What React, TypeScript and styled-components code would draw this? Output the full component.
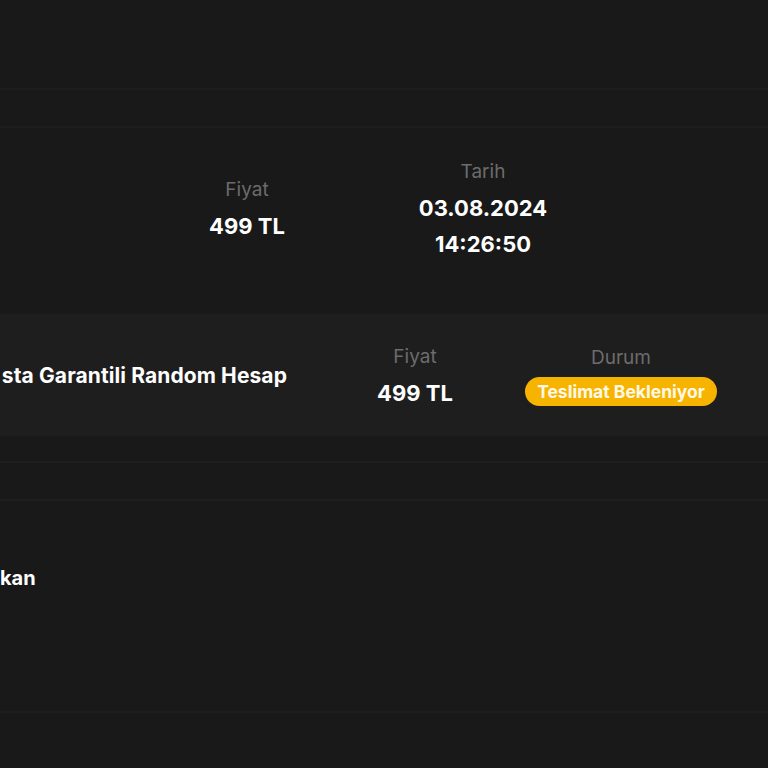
import styled, { createGlobalStyle } from 'styled-components';

const GlobalStyle = createGlobalStyle`
  html, body {
    margin: 0;
    padding: 0;
    background: #191919;
  }
  body {
    font-family: Inter, Lato, "Noto Sans", "Liberation Sans", sans-serif;
    color: #ffffff;
  }
`;

const Page = styled.div`
  display: flex;
  flex-direction: column;
  width: 768px;
  min-height: 768px;
  overflow: hidden;
  background: #191919;
`;

const Spacer = styled.div<{ $h: number }>`
  height: ${(p) => p.$h}px;
  flex: none;
`;

const Rule = styled.div`
  height: 2px;
  flex: none;
  background: #1e1e1e;
`;

const SummaryRow = styled.div`
  display: flex;
  align-items: center;
  height: 156px;
  box-sizing: border-box;
  padding: 4px 0 0 187px;
  gap: 76px;
  margin-bottom: 30px;
`;

const Column = styled.div<{ $w: number }>`
  display: flex;
  flex-direction: column;
  align-items: center;
  width: ${(p) => p.$w}px;
  flex: none;
`;

const Label = styled.span`
  font-size: 19px;
  line-height: 36px;
  color: #6c6c6c;
  font-weight: 400;
`;

const Value = styled.span`
  font-size: 22px;
  line-height: 36px;
  font-weight: 700;
  color: #ffffff;
`;

const OrderRow = styled.div`
  display: flex;
  align-items: center;
  height: 122px;
  background: #1e1e1e;
`;

const ProductName = styled.div`
  display: flex;
  justify-content: flex-end;
  width: 287px;
  flex: none;
  font-size: 21px;
  font-weight: 700;
  letter-spacing: 0.1px;
  white-space: nowrap;
  margin-right: 78px;
`;

const StatusColumn = styled(Column)`
  margin-left: 56px;
  margin-top: -4px;
  gap: 1px;
`;

const Badge = styled.span`
  display: inline-flex;
  align-items: center;
  justify-content: center;
  height: 29px;
  padding: 0 12px;
  border-radius: 15px;
  background: #f6b400;
  color: #fff8e6;
  font-size: 17.5px;
  font-weight: 700;
  white-space: nowrap;
`;

const StoreSection = styled.div`
  height: 210px;
  padding-top: 63px;
  box-sizing: border-box;
  flex: none;
`;

const StoreName = styled.div`
  font-size: 20px;
  line-height: 28px;
  font-weight: 700;
`;

const App = () => {
  return (
    <Page>
      <GlobalStyle />
      <Spacer $h={88} />
      <Rule />
      <Spacer $h={36} />
      <Rule />
      <SummaryRow>
        <Column $w={120}>
          <Label>Fiyat</Label>
          <Value>499 TL</Value>
        </Column>
        <Column $w={200}>
          <Label>Tarih</Label>
          <Value>03.08.2024</Value>
          <Value>14:26:50</Value>
        </Column>
      </SummaryRow>
      <OrderRow>
        <ProductName>
          <span>sta Garantili Random Hesap</span>
        </ProductName>
        <Column $w={100}>
          <Label>Fiyat</Label>
          <Value>499 TL</Value>
        </Column>
        <StatusColumn $w={200}>
          <Label>Durum</Label>
          <Badge>Teslimat Bekleniyor</Badge>
        </StatusColumn>
      </OrderRow>
      <Spacer $h={25} />
      <Rule />
      <Spacer $h={36} />
      <Rule />
      <StoreSection>
        <StoreName>kan</StoreName>
      </StoreSection>
      <Rule />
    </Page>
  );
};

export default App;
